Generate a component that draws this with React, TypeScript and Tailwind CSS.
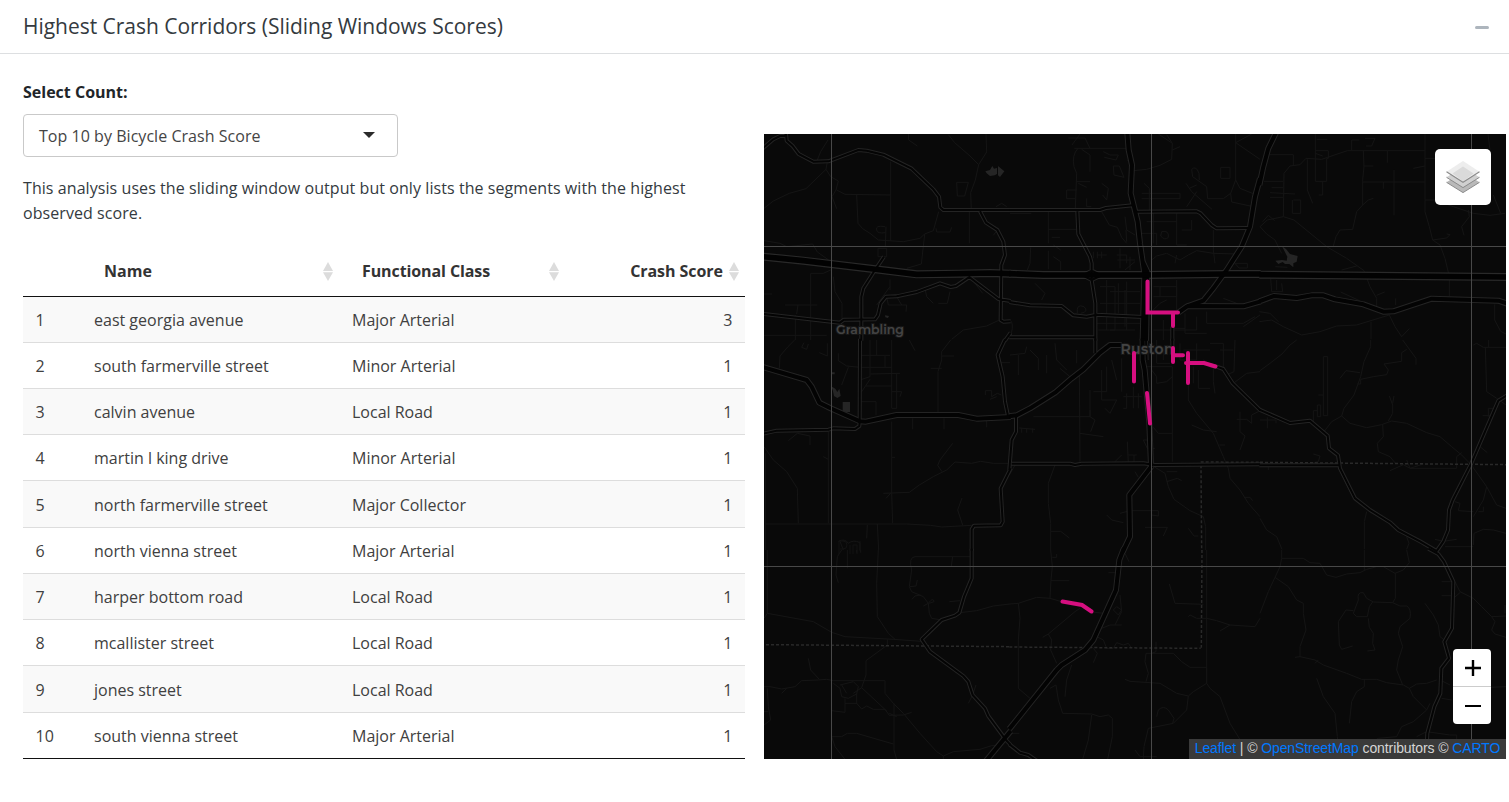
import React from "react";

type Tile = {
  x: number;
  y: number;
  motorway?: string;
  trunk?: string;
  major?: string;
  minor?: string;
  dashed?: string;
  water?: string;
};

// Each tile stores its geometry at three units per map pixel.
const tiles: Tile[] = [
  {
    x: 760,
    y: 130,
    motorway: "M0 379L130 392L340 417L470 433L600 431L690 429L752 431",
    major:
      "M0 62L12 52L40 28L60 18L74 18L78 12L80 32L98 48L116 72L160 95L205 94L295 60L320 62L370 74L455 116L520 178L537 200L541 232L550 240L752 240M372 380L345 420L310 475L304 500L304 632M0 551L12 552L240 578L252 569L345 568L354 555L362 520L378 500L410 499L470 486L540 460L572 471L588 468L628 441L715 507L752 513M660 244L678 278L712 300L730 335L735 375L724 405L722 570L730 575L752 574M735 632L752 608",
    minor:
      "M12 235L40 213L88 190L138 176L198 118L202 95M198 118L212 140L235 153L228 180L216 200L230 236M230 180L255 193L392 195M392 95V332M290 195L294 280L308 296L330 310L355 330L430 335L480 325L494 312L520 302L536 245M494 312L484 402L440 415M172 90L182 65L204 30M445 12L446 30L472 48M565 14L584 38L630 78L656 104L680 66L678 12M656 104L646 150L632 188L634 240M590 157H625L614 198H592ZM628 244V340M375 290Q345 285 350 300Q352 312 376 308M378 290L376 350M354 355H380V380H354ZM12 332L60 340L80 350L120 346L158 342L172 366L206 390M152 630V430H190L212 420M220 440L225 485L246 520V575M106 555V630M12 492H36M75 525H172M114 525L110 552M390 470L350 525M390 448V480M494 470L500 500L520 520M570 485L562 520H535M380 500L385 525H440L438 545M410 500L425 525M645 460L668 490M12 616H200M575 628L610 600L680 588L718 570M528 295L530 306H570L575 292M700 316L712 300M708 230L725 220L740 230",
    water: "M676 124L690 120L697 108L702 116L711 114V132L704 136L690 138L680 130ZM714 108L733 124L720 141L714 136ZM375 556L387 558L384 564L376 562Z",
  },
  {
    x: 1010,
    y: 130,
    motorway: "M-2 431L100 435L400 435L640 432L752 432",
    trunk:
      "M352 8L356 60L366 105L362 190L370 222L383 275L390 340L398 395L403 430L398 632M398 395L412 425L408 632M750 145L735 200L720 290L695 350L650 420L610 475L580 512L530 530L505 548M530 528L700 529L752 514",
    major:
      "M-2 240L270 240L288 234L368 226M380 245L560 244L572 250L605 285L620 295L718 294M202 244L205 312L240 380L245 400L245 450L256 520L256 632M-2 516L60 526L155 528L190 556L230 560L260 554L400 561M-2 622L255 622M218 436L245 422L275 436L245 450ZM487 590L487 632",
    minor:
      "M175 24H225L240 55M186 45L210 12M193 55H350M204 55Q185 75 192 110L200 130L196 235M215 58L240 75V125M280 65L300 75H325L318 90L283 82M310 108H328L342 142L312 135ZM170 180H200M170 180V206H195M200 155H240M205 160L230 172M230 205V230H244M275 160L295 175L290 210L278 195M370 108L352 90M370 122L410 118L450 106L485 88L487 40L470 14M445 12L487 40M487 60L510 50M677 12V38L725 12M677 38L750 88M677 38V150M632 112H660V145H632ZM677 150L662 190L640 206H593L590 170L548 140L545 118Q558 105 567 130L568 150M677 150L690 175L737 194M662 190L665 216L730 230M395 190H510V206H395M402 160L418 175V245M528 160L545 185L606 238M560 185L530 230M540 174L560 165M115 245V340M115 298H200M125 322H150M0 250H64M130 345L152 360M62 352L60 400L52 420M115 362V418M130 380L152 395V420M275 245L298 285L322 292L335 322L350 340M345 260L350 300L375 315M348 300L350 335M395 310H440V345M410 275H500M430 245V340M455 305Q478 300 475 322Q465 333 452 318ZM500 250V345L530 345M515 300L545 300V270M610 300V360L615 400M425 390L440 378L470 370L490 380L510 390L535 375L560 362L610 370L680 372M500 375L495 400M675 400H712V414H687ZM260 375H290M250 365V385M262 365V385M275 365V385M320 375H350V400M322 390H375M330 355V415M360 380V420M345 420L375 395M75 460L105 490L95 510M202 550Q198 520 222 530Q238 545 212 550M0 570Q12 580 4 610M325 460V550M345 480V590M270 470H315V600H265M290 450V600M300 485H390M270 520H390M260 580H390M300 600H375M350 455V600M430 470H500V500H430M450 500V470M430 540L450 520L470 510M500 450V540M525 550V610H590M590 500L620 475M640 505L680 520M590 545V580H700L735 560M700 590L750 555M430 600H560V560M460 570V630M485 595H525",
  },
  {
    x: 1260,
    y: 130,
    motorway: "M-2 434L748 441",
    trunk:
      "M50 4L25 55L10 110L-2 165M-2 514L42 498L110 504L155 496L190 496L225 508L310 523L370 545L400 544L515 506L715 512L748 523",
    minor:
      "M12 74H100V105M70 260L72 130L90 108L120 104L138 85L185 88L262 62H495M166 12V154H200V85H205V62L165 62M170 28H202M166 70L188 78M142 88V180L158 220M178 155H188V195H176M12 154H70M35 173H70M30 188L105 192M30 202H70M100 210H122V250H97V210M70 260L102 270L200 350L260 385L312 422L330 470L350 505V532M0 290L22 270L70 260M8 275L25 256L44 272M0 290L20 312L45 330L65 370M275 60V30H298M315 25H345L335 48H318M382 62V98M310 62L312 110L308 150V225L290 245L278 298L240 300L228 320L220 348M310 108H340M308 156H495M402 120V256M370 156V176M308 225L325 210L340 205M460 115L495 108M495 12V245L508 290L518 330L540 345L555 385L568 440V498M495 85H525M495 210H525L580 230L640 250L690 256L735 250M690 60L684 12M700 195L722 250M625 240L628 260L605 290L612 316M518 330L560 324L570 314L560 312M245 420L290 408M46 410L82 412M32 445L35 485H68L65 460M50 450V480M330 480M350 496L374 486M407 505V525M242 486L320 522M-2 545L30 550L55 575M-2 575L35 570L70 590L125 615L180 605L230 588L290 585L388 555L405 590L425 620M425 620L448 596M333 575V628M704 523V570L722 604L738 612",
    water: "M66 349L78 357L90 372L113 378L110 395L100 400V412L88 402L75 402L68 396L55 402L46 392L66 390L80 392L82 380Z",
  },
  {
    x: 760,
    y: 340,
    trunk:
      "M0 79L12 82L140 120L155 140L178 188L210 204L300 244L318 245L410 225L595 225L650 236L752 231",
    major:
      "M300 -4L299 245L298 258L285 267L220 265L205 269L50 272L0 283M735 -2L713 45L728 110L735 185L744 228M752 385L722 445L728 545L722 556L642 557L635 568L635 632",
    minor:
      "M104 0L84 20L60 48L58 85M145 12L140 28L125 22L132 8M202 10V48L178 38M235 40V62L260 78L300 82M265 82L245 135M300 46H390M300 82H395M330 0V82M350 0V45M375 48V82M395 0V205M300 120L330 110V82M332 102L420 100M410 100V205H395M318 138H395M395 155H425L420 170M348 185V225M300 185H348M305 155L330 118M572 0L545 35L545 60L534 95V218M512 85H545M545 48H582M448 0L465 32M676 165V152H695V170L712 160L724 165M690 178L710 170M722 68H750M458 235V268M552 235V268M680 240V262M12 320L40 360L80 395L112 445L115 550M205 275V550M85 302L112 280L150 288V315M190 350L205 358M395 245V460L398 550M395 352H405M578 310L540 360L533 376L546 395M370 460L448 457L478 435L520 410L560 390L585 366L635 370L662 364L700 370H750M392 460L378 475M606 474L593 510L608 555M15 552H440L512 556L545 561L635 556M16 340V630M322 555L320 595M352 552L356 630M235 604Q255 594 265 610Q280 598 300 608V630M240 604L250 630",
    water: "M212 138L226 146L232 156L238 146L242 168L232 174L222 168L218 150ZM248 186H270V216H248ZM213 97H224V103H213Z",
  },
  {
    x: 1010,
    y: 340,
    trunk:
      "M-2 229L20 226L60 205L135 158L185 115L220 88L270 38L300 15L335 15M398 -4L398 60L404 90L418 250L423 378M425 378L358 465L360 590L338 636",
    major:
      "M5 371L180 371L195 375L215 371L400 370L435 375L750 373M18 228L18 275L5 300L-2 390M256 -4L256 40M408 -4L410 60M600 76L620 80L640 87L668 130L752 212M487 -4V30",
    minor:
      "M0 45L45 40L50 20M25 45V105M60 30L85 55V90M110 45V100M135 10L140 60L170 90M200 30V70M150 85L180 110M208 90L210 365M70 230H240V210M240 150V230L255 240L242 275M210 280L280 290M28 264L75 268M35 265V278M50 265V278M68 265V278M275 90V180H320L300 220L285 205M290 80V155H250M305 60L320 120M335 55V155M350 160V205H340M370 140V205M340 170H395M385 205V160M410 80H487V365M440 0V70H480M425 90L440 110V130L470 125L487 110M460 20V60M510 10V60H560V10M520 30H600M550 80V130M565 90V145H600M580 60L610 80V125L615 160M535 130V180L560 220L610 280L640 350L655 385L660 415L690 450L715 490L750 530M545 255L580 270L620 275M628 315H645M600 10H640V85M630 30H670M675 0L672 95L650 105M670 130L710 100L750 95M680 238H710L725 250V225L745 215M690 215V275L705 288L690 330M430 262L445 280H487M425 300H400L412 325H435M352 305L355 370M315 365L335 345M372 345V370M355 345H380M135 375L115 430V490L122 550V630M122 574H152L178 594M330 390M375 395L385 412M432 380L465 400L475 440L492 478L540 512L580 530L587 560V630M470 395H502M470 425L502 415L515 422M290 525L305 540L340 548M330 520L360 512H445V528L425 525M405 562H472L460 588M535 565L552 588H565M702 472H720L728 482M-2 405L18 370",
    dashed: "M572 366L752 367M573 376L575 632",
  },
  {
    x: 1260,
    y: 340,
    major:
      "M-2 209L90 249L150 242L203 287L207 325L234 346L240 385L285 475L330 510L390 547L415 570L480 604L530 633M748 162L715 182L634 370L578 480L567 510L564 570L550 604L528 636M-2 376L237 376",
    minor:
      "M110 0L90 15L66 42L30 70L0 92M190 50H203V227H190ZM175 165H190M172 195H182V230H172ZM160 250V212H172M332 0V20L312 65L302 110L282 165L252 205L245 228L270 250L320 263L365 254L395 243L440 250L500 278L540 290L575 320L605 345L634 375L680 440L710 495L738 505M245 228L215 245L192 275M240 115L258 92L300 98M292 132H302V118L340 110L380 104L385 90L372 72L425 64V38L440 28M428 0L468 55V74M368 254L370 290L352 310L355 335L390 350L408 372M390 392L430 374L450 385L490 372M385 243L398 220V195L388 168M398 190L402 168M440 360L450 385H590V350L605 338M640 15L650 10L670 22H738M686 0V22M676 22L680 155L710 175L738 195M685 230V205H705M668 227H695M660 320L682 338M680 440L670 480L640 530M655 515H670V500M585 485L600 490L595 512L640 515M640 615L642 580L670 568L700 570L738 580M0 535L20 570L50 590L66 628M320 515L313 545V628M440 590L447 610L440 628M22 232V265M0 240H22L48 240V250M160 342L180 348L175 365L160 368M525 598L550 604L590 598M555 620H640M25 376V390",
    dashed: "M0 367L748 374",
  },
  {
    x: 760,
    y: 550,
    trunk: "M672 640L752 543",
    major:
      "M635 -4L635 85L612 140L598 188L585 197L545 210L485 268L510 305L610 378L625 395L638 435L675 475L685 498L738 570L752 585",
    minor:
      "M22 0V190L160 215L215 247L255 260L400 268L485 274M22 190L12 205M355 0L350 100L352 200L385 250L405 268M382 268V285L318 332V375L305 413L280 430M245 0L232 20L228 75L235 98M262 0V55M290 0V8M302 0V8M630 20H465Q445 22 455 60L448 110L455 125L490 140L505 160L508 190L515 205L545 210M450 110L468 108L472 90M456 148L465 138L482 135M490 168L505 160Q520 140 522 155L508 160M578 20L574 48M568 155L600 152M600 188L650 182L700 168L750 162M12 410H30L65 417L105 410L125 392L175 390L200 388L220 392H375V430L400 460L430 490L480 550L530 605L550 618L580 605L660 598L695 587H715M145 325L152 360L178 388M65 430L80 415M220 400L240 415L245 440L265 445L290 432L295 410L280 395L240 405M245 405L260 430M290 430V460L305 477L320 468L340 478H375L388 496L430 495L455 487M255 445V487L215 482M255 460H292M305 413L380 483M402 460V600L410 628M388 490L410 500M215 560H245L262 550H290L400 582M215 560L225 590L255 628M22 415L25 470L32 510L12 525M12 485H25M625 460L638 435L648 405M550 618V628",
    dashed: "M18 284L752 290",
  },
  {
    x: 1010,
    y: 550,
    trunk: "M342 -6L328 30L318 120L250 270L225 300L155 345L140 360L-2 537",
    major: "M-2 583L30 608L55 615L80 632",
    minor:
      "M0 162L25 160L80 142L120 145L155 155M120 145L123 90L127 50L122 0M123 92H178M127 22H140V12M25 160L30 205L25 270V415L60 445M240 185L280 190M210 175L195 185L115 252L98 262M115 252L125 270L122 300L140 340M295 68H315M345 10L357 35M330 135L335 185L315 225M310 180L320 170L335 180L325 195ZM275 235L300 225H335M260 260L280 270L290 295H310L320 278L340 285L355 280L365 295M250 295L262 310L250 338M185 345L170 390L165 440M120 415L138 405L145 450L158 490L245 492L270 500L295 495L307 505V560L293 628M245 495L235 570L218 628M345 388L360 394L450 400L500 430L535 438L530 480L490 520L415 535L402 590L400 628M535 438L550 425L590 400V353M408 395L415 370L405 335L408 310H490L515 335L540 352H590M440 500L445 480Q460 465 475 480L492 505L488 520M375 600L390 620H440M438 275V305L425 310M478 102L495 160L580 163M535 200L540 195L560 205H590L620 212L660 225L735 230L750 205M660 225L630 243M590 0V400L600 415L630 440L645 480L660 520L700 585L710 628M0 550H28",
    dashed: "M-2 291L572 295M576 0L574 293",
  },
  {
    x: 1260,
    y: 550,
    major:
      "M505 -4L535 12L552 35L580 95L576 235L553 275L567 325L544 355L541 430L523 470L502 550L498 632",
    minor:
      "M65 0V25H130L150 38L180 40L200 75L228 82L260 72L300 68L320 58L350 50H370L405 70L430 60L448 38L440 0M65 25L60 50L45 82L25 125L0 190M45 82L85 110L110 150L130 160V190L138 240L120 290V320L105 322M120 320L165 330L190 345L260 370L305 388L350 388L380 398L430 405L448 415L470 402L500 400L530 390M313 0V62M406 70V145L398 158L340 156L320 145L310 128Q290 125 295 150L280 190L290 200L322 200L328 170L338 156M280 182L258 180L235 215L238 285L245 298L278 288M325 205L328 232L340 250L338 280L345 300L322 303M398 158L420 168L440 168Q455 175 450 205L420 230L415 250L428 290L415 330L410 360L428 405M495 160L520 195L535 225L540 260L553 270M313 388V410L290 425L275 455L268 520M170 385L190 440L225 490L232 560L238 628M448 415L460 440L500 480L460 515L425 530L410 560L355 565L310 590L290 628M500 480L510 460M545 95H580M545 137H580M585 95L600 125L640 145L665 170L695 200L738 198M600 128L580 145M695 200L705 215L695 240L705 252L738 262M735 165V190M545 445L575 450M165 340L175 330M540 390L570 405M690 412L738 410M470 560L500 545L570 555L590 555V580",
  },
];

function Layer({ field, color, width, dash }: { field: keyof Tile; color: string; width: number; dash?: string }) {
  return (
    <g fill="none" stroke={color} strokeWidth={width} strokeDasharray={dash} strokeLinejoin="round">
      {tiles.map((t) =>
        t[field] ? (
          <path key={`${t.x}-${t.y}`} d={String(t[field])} transform={`translate(${t.x} ${t.y}) scale(.333333)`} />
        ) : null,
      )}
    </g>
  );
}

function CrashMap() {
  return (
    <svg viewBox="764 134 742 625" className="block h-[625px] w-[742px]">
      <rect x="764" y="134" width="742" height="625" fill="#090909" />
      <Layer field="minor" color="#151515" width={3} />
      <g fill="#252525">
        {tiles.map((t) =>
          t.water ? <path key={`${t.x}-${t.y}`} d={t.water} transform={`translate(${t.x} ${t.y}) scale(.333333)`} /> : null,
        )}
      </g>
      <path d="M839 554v-13h4q4 0 4 4t-4 4h-3M850 554v-9M853 554v-9h4v9M860 541v10" fill="none" stroke="#121212" />
      <Layer field="dashed" color="#292929" width={4.5} dash="9 6" />
      <Layer field="major" color="#242424" width={12} />
      <Layer field="trunk" color="#242424" width={18} />
      <Layer field="motorway" color="#292929" width={24} />
      <Layer field="major" color="#040404" width={6} />
      <Layer field="trunk" color="#030303" width={12} />
      <Layer field="motorway" color="#020202" width={17} />
      <g
        className="font-['Montserrat','Open_Sans',sans-serif] font-semibold"
        fill="#444"
        stroke="#161616"
        strokeWidth="2"
        paintOrder="stroke"
      >
        <text x="836" y="334" fontSize="12.5" textLength="68">Grambling</text>
        <text x="1120.5" y="353.5" fontSize="14" textLength="53">Ruston</text>
      </g>
      <path d="M831.5 134V759M1151.5 134V759M1471.5 134V759M764 246.5H1506M764 566.5H1506" stroke="#484848" />
      <path
        d="M1147.5 281.5V312.5H1178M1173 314V326M1173 348V362M1173 355.2H1183M1188 353V383M1186 363H1204L1215.500 366.500M1134 353V381.500M1147 393L1150 423.500M1062.500 601.500L1082 605L1091.500 611.500"
        fill="none"
        stroke="#d60f80"
        strokeWidth="4"
        strokeLinecap="round"
      />
    </svg>
  );
}

function LayersIcon() {
  return (
    <svg width="36" height="34" viewBox="0 0 36 34">
      <path d="M18 12L34.500 22.300L18 32.600L1.500 22.300Z" fill="#b9b9b9" />
      <path d="M1.500 22.300L18 32.600L34.500 22.300" fill="none" stroke="#8b8b8b" strokeWidth="1" />
      <path d="M18 7L34.500 17.300L18 27.600L1.500 17.300Z" fill="#d0d0d0" />
      <path d="M1.500 17.300L18 27.600L34.500 17.300" fill="none" stroke="#8b8b8b" strokeWidth="1" />
      <path d="M18 1L34.500 11.800L18 22.300L1.500 11.800Z" fill="#ededed" />
      <path d="M18 6.500L28.500 13.600L18 21.500L7.500 13.600Z" fill="#dadada" />
      <path d="M1.500 11.800L18 22.300L34.500 11.800" fill="none" stroke="#8b8b8b" strokeWidth="1.100" />
    </svg>
  );
}

function SortIcon() {
  return (
    <svg width="10" height="19" viewBox="0 0 10 19" fill="#dcdcdc" className="shrink-0">
      <path d="M5 0L10 9H0ZM5 19L0 10.300H10Z" />
    </svg>
  );
}

const rows: [string, string, number][] = [
  ["east georgia avenue", "Major Arterial", 3],
  ["south farmerville street", "Minor Arterial", 1],
  ["calvin avenue", "Local Road", 1],
  ["martin l king drive", "Minor Arterial", 1],
  ["north farmerville street", "Major Collector", 1],
  ["north vienna street", "Major Arterial", 1],
  ["harper bottom road", "Local Road", 1],
  ["mcallister street", "Local Road", 1],
  ["jones street", "Local Road", 1],
  ["south vienna street", "Major Arterial", 1],
];

export default function App() {
  return (
    <div className="h-[802px] w-[1509px] overflow-hidden bg-white font-['Segoe_UI','Open_Sans',sans-serif] text-base font-normal text-[#212529]">
      <header className="flex h-[54px] items-center justify-between border-b border-[#dddfe1] pr-[20px] pb-px pl-[23px]">
        <h1 className="text-[21px] leading-[30px] font-normal tracking-[-0.03px] text-[#343a40]">
          Highest Crash Corridors (Sliding Windows Scores)
        </h1>
        <span className="mt-[3px] h-[3px] w-[14px] rounded-sm bg-[#adb5bd]" />
      </header>
      <main className="flex pl-[23px]">
        <section className="w-[722px] pt-[26px]">
          <div className="h-[25px] leading-[25px] font-bold">Select Count:</div>
          <div className="mt-[9px] flex h-[43px] w-[375px] items-center justify-between rounded border border-[#c9c9c9] pr-[22px] pl-[15px] text-[#444]">
            <span className="tracking-[0.04px]">Top 10 by Bicycle Crash Score</span>
            <svg width="12" height="6" viewBox="0 0 12 6" fill="#2b2b2b" className="mb-[2px]">
              <path d="M0 0H12L6 6Z" />
            </svg>
          </div>
          <p className="mt-[19px] h-[50px] leading-[25px] tracking-[0.07px] text-[#343a40]">
            This analysis uses the sliding window output but only lists the segments with the highest
            <br />
            observed score.
          </p>
          <div className="mt-[20px] text-[#333]">
            <div className="grid h-[51px] grid-cols-[58px_258px_226px_180px] items-center border-b border-[#111] font-bold">
              <span />
              <div className="flex items-center justify-between pr-[6.500px] pl-[23px]">
                <span>Name</span>
                <SortIcon />
              </div>
              <div className="flex items-center justify-between pr-[6.500px] pl-[23px]">
                <span className="tracking-[-0.1px]">Functional Class</span>
                <SortIcon />
              </div>
              <div className="flex items-center justify-end gap-[5.500px] pr-[6.500px]">
                <span className="tracking-[-0.05px]">Crash Score</span>
                <SortIcon />
              </div>
            </div>
            {rows.map(([name, cls, score], i) => (
              <div
                key={name}
                className={`grid grid-cols-[58px_258px_226px_180px] items-center border-b border-[#ddd] text-[#404040] odd:bg-white even:bg-[#f9f9f9] last:border-[#111] ${
                  i === 4 || i === 8 ? "h-[47px] pt-[2px]" : "h-[46px]"
                }`}
              >
                <span className="pl-[12.500px]">{i + 1}</span>
                <span className="pl-[13px]">{name}</span>
                <span className="pl-[13px]">{cls}</span>
                <span className="pr-[12.500px] text-right">{score}</span>
              </div>
            ))}
          </div>
        </section>
        <section className="relative mt-[80px] ml-[19px] h-[625px] w-[742px]">
          <CrashMap />
          <button className="absolute top-[15px] right-[15px] flex h-[56px] w-[56px] items-center justify-center rounded-[5px] bg-white">
            <LayersIcon />
          </button>
          <div className="absolute right-[15px] bottom-[35px] flex h-[75px] w-[38px] flex-col overflow-hidden rounded-sm bg-white">
            <button className="flex h-[38px] items-center justify-center border-b border-[#ccc] pl-[2px]">
              <svg width="16" height="16" viewBox="0 0 16 16" stroke="#000" strokeWidth="2.4">
                <path d="M0 8H16M8 0V16" />
              </svg>
            </button>
            <button className="flex h-[37px] items-center justify-center pl-[2px]">
              <svg width="16" height="2" viewBox="0 0 16 2">
                <path d="M0 0H16V2H0Z" />
              </svg>
            </button>
          </div>
          <div className="absolute right-0 bottom-0 flex h-[20px] w-[317px] items-center justify-center bg-[#3a3a3a] pb-[2px] font-['Liberation_Sans',Arial,sans-serif] text-[14px] font-normal tracking-[-0.1px] whitespace-pre text-[#d5d5d5]">
            <a className="text-[#0078ff]">Leaflet</a> | © <a className="text-[#0078ff]">OpenStreetMap</a> contributors ©{" "}
            <a className="text-[#0078ff]">CARTO</a>
          </div>
        </section>
      </main>
    </div>
  );
}
